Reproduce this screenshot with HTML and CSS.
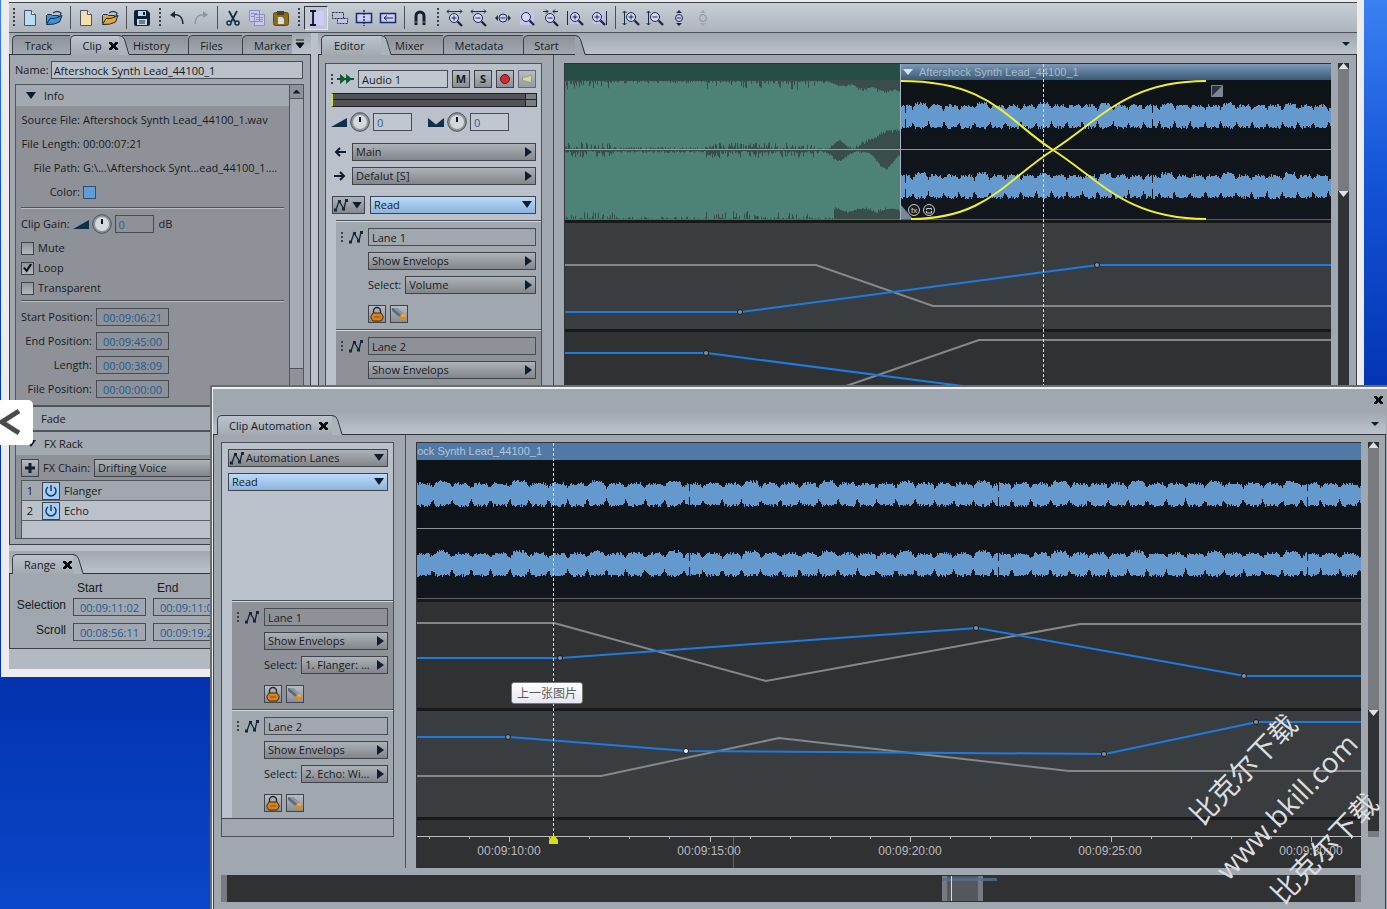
FILE: index.html
```
<!DOCTYPE html>
<html lang="en">
<head>
<meta charset="utf-8">
<title>Audio editor</title>
<link rel="stylesheet" href="styles.css">
</head>
<body>
<svg class="defs" width="0" height="0" aria-hidden="true">
  <defs>
    <symbol id="page" viewBox="0 0 18 18"><path d="M3.5 1.5h7l4 4v11h-11z" stroke="#4c5560"/><path d="M10.5 1.5v4h4" fill="#f4f8fb" stroke="#4c5560"/></symbol>
    <symbol id="folder" viewBox="0 0 18 18"><path d="M1.500 14.500V6.500l1-1h4l1 1h6v3" stroke="#16344f"/><path d="M8 4q4-3 8 0l-1 3" fill="none" stroke="#27435c" stroke-width="1.300"/><path d="M1.500 15.500 5 9.500q5 1 12-3L14.500 13q-5 3-13 2.500z" stroke="#10283c"/></symbol>
    <symbol id="mag" viewBox="0 0 18 18"><circle cx="8" cy="8" r="4.500" fill="#d6d6fa" stroke="#1b2a4a"/><path d="M11.500 11.500 16 16" stroke="#1b2a4a" stroke-width="2.400"/></symbol>
    <symbol id="env" viewBox="0 0 14 14"><path d="M2 12 5 3l5 8 2-9" fill="none" stroke="#13293a" stroke-width="1.300"/><path d="M0 10.500h3v3H0zM4 2h3v3H4zM8 9.500h3v3H8zM11 1h3v3h-3z" fill="#13293a"/></symbol>
    <symbol id="knob" viewBox="0 0 20 20"><circle cx="10" cy="10" r="9.300" fill="#8f949a" stroke="#4c5158"/><circle cx="10" cy="10" r="7" fill="#d3d8dd"/><path d="M10 5v5" stroke="#0c1118" stroke-width="2"/></symbol>
    <symbol id="wedge" viewBox="0 0 16 10"><path d="M0 10 16 1v9z" fill="#0f2f4c"/></symbol>
    <symbol id="pan" viewBox="0 0 16 10"><path d="M0 1 8 7.500 16 1v9H0z" fill="#0f2f4c"/></symbol>
    <symbol id="lock" viewBox="0 0 16 16"><path d="M4.500 8V5a3.500 3.500 0 0 1 7 0v3" fill="none" stroke="#25282c" stroke-width="1.400"/><path d="M4 7h8l2 3v2l-2 3H4l-2-3v-2z" fill="#d8821a" stroke="#3a2a12"/><path d="M5 11h6" stroke="#8d4e0a"/></symbol>
    <symbol id="eraser" viewBox="0 0 16 16"><path d="M1 2h5l6 5.500-3 4L1 5z" fill="#5f6a76"/><path d="M2 2h4l6 5.500-2 1.500z" fill="#8797a8"/><path d="m12 7.500 3 3V14h-5l-2-3.500z" fill="#dc8a22"/><path d="m12 7.500 3 3-4 .5-1-2z" fill="#f0aa4c"/></symbol>
    <symbol id="power" viewBox="0 0 16 16"><path d="M5 4a5 5 0 1 0 6 0" fill="none" stroke="#0f3f74" stroke-width="1.500"/><path d="M8 2v6" stroke="#0f3f74" stroke-width="1.500"/></symbol>
    <symbol id="slope" viewBox="0 0 14 20"><path class="slope-fill" d="M0 .5q4 0 5.500 4L10 16q1 3.500 4 3.500V20H0z"/><path d="M0 .5q4 0 5.500 4L10 19.500h4" fill="none" stroke="#2f343b"/></symbol>
    <linearGradient id="shade" x2="0" y2="1"><stop stop-color="#0e1318"/><stop offset="1" stop-color="#12171d"/></linearGradient>
  </defs>
</svg>

<main class="window main-window">
  <div class="client">
    <div class="toolbar" role="toolbar" aria-label="Main">
      <span class="grip first"></span>
      <button class="tool" aria-label="New session"><svg fill="#b9dcf3"><use href="#page"/></svg></button>
      <button class="tool" aria-label="Open session"><svg fill="#3f92dc"><use href="#folder"/></svg></button>
      <span class="sep"></span>
      <button class="tool" aria-label="New file"><svg fill="#f6dfae"><use href="#page"/></svg></button>
      <button class="tool" aria-label="Open file"><svg fill="#eca52c"><use href="#folder"/></svg></button>
      <span class="sep"></span>
      <button class="tool" aria-label="Save"><svg><path d="M1 3q0-2 2-2h11l3 3v11q0 2-2 2H3q-2 0-2-2z" fill="#0d2438"/><path d="M5 2h8v5H5zM4 10h10v6H4z" fill="#c9d6e0"/><path d="M10 3h2v3h-2z" fill="#0d2438"/><path d="M6 12h6M6 14h6" stroke="#0d2438"/></svg></button>
      <span class="grip"></span>
      <button class="tool" aria-label="Undo"><svg><path d="M5 6q9-2 10 9" fill="none" stroke="#1b2735" stroke-width="1.500"/><path d="m2 6 5-4v7z" fill="#1b2735"/></svg></button>
      <button class="tool" aria-label="Redo"><svg><path d="M13 6Q4 4 3 15" fill="none" stroke="#8d949c" stroke-width="1.500"/><path d="m16 6-5-4v7z" fill="#8d949c"/></svg></button>
      <span class="sep"></span>
      <button class="tool" aria-label="Cut"><svg><path d="m5 2 6 11M13 2 7 13" stroke="#12304a" stroke-width="1.800"/><circle cx="5" cy="14" r="2" fill="none" stroke="#12304a" stroke-width="1.500"/><circle cx="13" cy="14" r="2" fill="none" stroke="#12304a" stroke-width="1.500"/></svg></button>
      <button class="tool" aria-label="Copy"><svg fill="#c9c8ee" stroke="#8e8dbb"><path d="M1.500 1.500h10v11h-10zM6.500 5.500h10v11h-10z"/><path d="M3 4.500h6M8 8.500h7M8 10.500h7M8 12.500h7M3 7.500h3"/></svg></button>
      <button class="tool" aria-label="Paste"><svg><rect x="1.500" y="3.500" width="15" height="13" rx="2" fill="#8a6d1d" stroke="#5d4a14"/><path d="M5 2h7v4H5z" fill="#4b4226"/><path d="M6 8h4l2 2v5H6z" fill="#d5dbe6"/></svg></button>
      <span class="grip"></span>
      <button class="tool pressed" aria-label="Time selection"><svg><path d="M8 2h9v14H8z" fill="#cfcdf8"/><path d="M3 2h6M3 16h6M6 2v14" stroke="#101a30" stroke-width="1.800"/></svg></button>
      <button class="tool" aria-label="Range"><svg fill="none" stroke="#1b2a4a" stroke-dasharray="2 1"><path d="M1.500 3.500h11v6h-11z"/><path d="M6.500 9.500h10v5h-10z" fill="#c5c4ee"/></svg></button>
      <button class="tool" aria-label="Split"><svg fill="#cfcdf8" stroke="#1b2a6a"><path d="M1.500 4.500h15v9h-15z" stroke-width="1.500"/><path d="M9 1v16" stroke-dasharray="2 1" stroke-width="1.500"/></svg></button>
      <button class="tool" aria-label="Trim"><svg fill="#cfcdf8" stroke="#1b2a6a"><path d="M1.500 4.500h15v9h-15z" stroke-width="1.500"/><path d="M14 9H5m3-2.500L5 9l3 2.500" fill="none"/></svg></button>
      <span class="sep"></span>
      <button class="tool" aria-label="Snap"><svg><path d="M5 16V7a4 4 0 0 1 8 0v9" fill="none" stroke="#14202e" stroke-width="3"/><path d="M3 13h4M11 13h4" stroke="#7e8790"/></svg></button>
      <span class="grip"></span>
      <button class="tool" aria-label="Zoom in time"><svg><use href="#mag" y="1"/><path d="M5.500 9h5M8 6.500v5M1 2.500h15M3 .5l-2 2 2 2M14 .5l2 2-2 2" fill="none" stroke="#1b2a4a"/></svg></button>
      <button class="tool" aria-label="Zoom out time"><svg><use href="#mag" y="1"/><path d="M5.500 9h5M1 2.500h15M3 .5l-2 2 2 2M14 .5l2 2-2 2" fill="none" stroke="#1b2a4a"/></svg></button>
      <button class="tool" aria-label="Zoom full time"><svg><circle cx="9" cy="9" r="4" fill="#cfcdf8" stroke="#1b2a4a"/><path d="M6.500 9h5" stroke="#1b2a4a"/><path d="M4 6v6L1 9zM14 6v6l3-3z" fill="#1b2a4a"/></svg></button>
      <button class="tool" aria-label="Zoom selection"><svg><path d="M2 2h14v14H2z" fill="#c5c4f0"/><use href="#mag"/></svg></button>
      <button class="tool" aria-label="Zoom reset"><svg><use href="#mag" y="1"/><path d="M5.500 9h5M1 2.500h5M16 2.500h-5M4 .5l2 2-2 2M13 .5l-2 2 2 2" fill="none" stroke="#1b2a4a"/></svg></button>
      <button class="tool" aria-label="Zoom in point"><svg><path d="M4 2h10v13H4z" fill="#c5c4f0"/><use href="#mag" x="1"/><path d="M6.500 8h5M9 5.500v5M1.500 2v14" stroke="#1b2a4a"/></svg></button>
      <button class="tool" aria-label="Zoom out point"><svg><path d="M3 2h10v13H3z" fill="#c5c4f0"/><use href="#mag" x="-1"/><path d="M4.500 8h5M7 5.500v5M16.500 2v14" stroke="#1b2a4a"/></svg></button>
      <span class="sep"></span>
      <button class="tool" aria-label="Zoom in amplitude"><svg><use href="#mag" x="1"/><path d="M6.500 8h5M9 5.500v5M2.500 2v14M.5 4l2-2 2 2M.5 14l2 2 2-2" fill="none" stroke="#1b2a4a"/></svg></button>
      <button class="tool" aria-label="Zoom out amplitude"><svg><use href="#mag" x="1"/><path d="M6.500 8h5M2.500 2v14M.5 4l2-2 2 2M.5 14l2 2 2-2" fill="none" stroke="#1b2a4a"/></svg></button>
      <button class="tool" aria-label="Zoom full amplitude"><svg><circle cx="9" cy="9" r="3.500" fill="#cfcdf8" stroke="#1b2a4a"/><path d="M7 9h4" stroke="#1b2a4a"/><path d="M6 4h6L9 1zM6 14h6l-3 3z" fill="#1b2a4a"/></svg></button>
      <button class="tool" aria-label="Zoom reset amplitude"><svg><circle cx="9" cy="9" r="3.500" fill="#b9bec8" stroke="#8d939c"/><path d="M6 4h6L9 1zM6 14h6l-3 3z" fill="#a0a6af"/></svg></button>
    </div>

    <div class="workspace">
      <div class="side">
        <section class="pane clip-pane">
          <div class="tabs" role="tablist">
            <button class="tab w-track" role="tab">Track</button>
            <button class="tab active w-clip" role="tab">Clip <span class="x"></span></button>
            <svg class="slope on"><use href="#slope"/></svg>
            <button class="tab flat w-history" role="tab">History</button>
            <button class="tab w-files" role="tab">Files</button>
            <button class="tab w-marker" role="tab">Marker</button>
            <button class="more" aria-label="More tabs"><svg width="10" height="10"><path d="M1 1h8M1 4h8L5 9z" stroke="#0c0f13" fill="#0c0f13"/></svg></button>
          </div>
          <div class="pane-body clip-body">
            <div class="name-row"><label for="clip-name">Name:</label><input id="clip-name" class="field light" value="Aftershock Synth Lead_44100_1"></div>
            <div class="inspector">
              <div class="inspector-main">
                <h2 class="group-head first"><span class="tri down"></span>Info</h2>
                <dl class="facts">
                  <dt>Source File:</dt><dd>Aftershock Synth Lead_44100_1.wav</dd>
                  <dt>File Length:</dt><dd>00:00:07:21</dd>
                  <dt>File Path:</dt><dd>G:\...\Aftershock Synt...ead_44100_1....</dd>
                  <dt>Color:</dt><dd><button class="swatch" aria-label="Clip color"></button></dd>
                </dl>
                <hr class="rule">
                <div class="gain"><label for="gain">Clip Gain:</label><svg width="16" height="10"><use href="#wedge"/></svg><svg width="20" height="20"><use href="#knob"/></svg><input id="gain" class="field num" value="0"><span class="unit">dB</span></div>
                <label class="check"><input type="checkbox">Mute</label>
                <label class="check"><input type="checkbox" checked>Loop</label>
                <label class="check"><input type="checkbox">Transparent</label>
                <hr class="rule">
                <div class="times">
                  <label for="t1">Start Position:</label><input id="t1" class="field time" value="00:09:06:21">
                  <label for="t2">End Position:</label><input id="t2" class="field time" value="00:09:45:00">
                  <label for="t3">Length:</label><input id="t3" class="field time" value="00:00:38:09">
                  <label for="t4">File Position:</label><input id="t4" class="field time" value="00:00:00:00">
                </div>
                <h2 class="group-head lined"><span class="tri right"></span>Fade</h2>
                <h2 class="group-head lined"><span class="tri down"></span>FX Rack</h2>
                <div class="chain"><button class="mini" aria-label="Add effect"><svg width="12" height="12"><path d="M6 1v10M1 6h10" stroke="#0c2233" stroke-width="3"/></svg></button><label for="chain">FX Chain:</label><span class="drop grow"><select id="chain"><option>Drifting Voice</option></select></span></div>
                <ol class="fx">
                  <li><span class="num-cell">1</span><button class="mini blue" aria-label="Toggle Flanger"><svg width="16" height="16"><use href="#power"/></svg></button>Flanger</li>
                  <li><span class="num-cell">2</span><button class="mini blue" aria-label="Toggle Echo"><svg width="16" height="16"><use href="#power"/></svg></button>Echo</li>
                </ol>
              </div>
              <div class="vbar light-bar"><button aria-label="Scroll up"><span class="tri up small"></span></button><span class="thumb"></span></div>
            </div>
          </div>
        </section>
        <section class="pane range-pane">
          <div class="tabs" role="tablist">
            <button class="tab active w-range" role="tab">Range <span class="x"></span></button>
            <svg class="slope on"><use href="#slope"/></svg>
          </div>
          <div class="pane-body range-body">
            <span></span><span class="col">Start</span><span class="col">End</span>
            <span class="row-name">Selection</span><input aria-label="Selection start" class="field time" value="00:09:11:02"><input aria-label="Selection end" class="field time" value="00:09:11:02">
            <span class="row-name">Scroll</span><input aria-label="Scroll start" class="field time" value="00:08:56:11"><input aria-label="Scroll end" class="field time" value="00:09:19:23">
          </div>
        </section>
      </div>

      <section class="pane editor-pane">
        <div class="tabs" role="tablist">
          <button class="tab active w-editor" role="tab">Editor</button>
          <svg class="slope on"><use href="#slope"/></svg>
          <button class="tab flat w-mixer" role="tab">Mixer</button>
          <button class="tab w-meta" role="tab">Metadata</button>
          <button class="tab w-start" role="tab">Start</button>
          <svg class="slope"><use href="#slope"/></svg>
          <button class="caret" aria-label="Tab menu"><span class="tri down small"></span></button>
        </div>
        <div class="pane-body editor-body">
          <div class="track">
            <div class="row track-name"><span class="dots"></span><svg class="wave-icon" width="17" height="12"><path d="M0 6h17" stroke="#0f5a35" stroke-width="2"/><path d="M3 1l6 5-6 5zM9 1l6 5-6 5z" fill="#0f5a35"/></svg><input class="field grow light" aria-label="Track name" value="Audio 1"><button class="mini">M</button><button class="mini">S</button><button class="mini" aria-label="Record"><svg width="12" height="12"><circle cx="6" cy="6" r="4.500" fill="#d22a2e" stroke="#5d1518"/></svg></button><button class="mini faint" aria-label="Monitor"><svg width="12" height="12"><path d="M1.500 4h3l6-2v8l-6-2h-3z" fill="#dfe09a" stroke="#85886a"/></svg></button></div>
            <div class="meter"><span></span></div>
            <div class="row knobs"><svg width="16" height="10"><use href="#wedge"/></svg><svg width="20" height="20"><use href="#knob"/></svg><input class="field num light" aria-label="Volume" value="0"><svg class="pan" width="16" height="10"><use href="#pan"/></svg><svg width="20" height="20"><use href="#knob"/></svg><input class="field num light" aria-label="Pan" value="0"></div>
            <div class="row io"><svg width="14" height="12"><path d="M13 6H3m4-4L3 6l4 4" fill="none" stroke="#0c1f30" stroke-width="2"/></svg><span class="drop side-tri grow"><select aria-label="Output"><option>Main</option></select></span></div>
            <div class="row io"><svg width="14" height="12"><path d="M1 6h10M7 2l4 4-4 4" fill="none" stroke="#0c1f30" stroke-width="2"/></svg><span class="drop side-tri grow"><select aria-label="Input"><option>Defalut [S]</option></select></span></div>
            <div class="row auto"><button class="lanes-btn" aria-label="Lanes"><svg width="14" height="14"><use href="#env"/></svg><span class="tri down"></span></button><span class="drop read grow"><select aria-label="Automation mode"><option>Read</option></select></span></div>
            <div class="lane">
              <div class="row"><span class="lane-mark"><span class="dots"></span><svg width="14" height="14"><use href="#env"/></svg></span><input class="field grow" aria-label="Lane name" value="Lane 1"></div>
              <div class="row inset"><span class="drop side-tri grow"><select aria-label="Envelopes"><option>Show Envelops</option></select></span></div>
              <div class="row inset"><label for="s1">Select:</label><span class="drop side-tri grow"><select id="s1"><option>Volume</option></select></span></div>
              <div class="row inset tools"><button class="mini" aria-label="Lock"><svg width="16" height="16"><use href="#lock"/></svg></button><button class="mini" aria-label="Clear"><svg width="16" height="16"><use href="#eraser"/></svg></button></div>
            </div>
            <div class="lane dim">
              <div class="row"><span class="lane-mark"><span class="dots"></span><svg width="14" height="14"><use href="#env"/></svg></span><input class="field grow" aria-label="Lane name" value="Lane 2"></div>
              <div class="row inset"><span class="drop side-tri grow"><select aria-label="Envelopes"><option>Show Envelops</option></select></span></div>
            </div>
          </div>
          <div class="splitter"></div>
          <div class="canvas">
            <div class="clips">
              <div class="clip teal"><div class="clip-title"></div>
                <svg class="wave tall"><path fill="#4d8377" d="M0 0h3000v140H0z"/><path id="teal-shade" fill="#394d4a"/><path d="M0 69.500h3000" stroke="#97a5a1"/><path d="M0 139.500h3000" stroke="#5e6c6a"/></svg></div>
              <div class="clip blue"><div class="clip-title shaded"><span class="tri down pale"></span>Aftershock Synth Lead_44100_1</div>
                <svg class="wave tall"><path fill="url(#shade)" d="M0 0h3000v140H0z"/><path data-wave="36,15.400,251" fill="#6399cd"/><path data-wave="106,15.400,251" fill="#6399cd"/><path d="M0 69.500h3000" stroke="#8d9296"/><path d="M0 139.500h3000" stroke="#5b5f63"/><path d="M0 125v14h12z" fill="#788697"/><path d="M0 1C90 1 105 40 152 70S225 139 305 139M10 139C85 139 105 100 152 70S225 1 305 1" fill="none" stroke="#f0ef37" stroke-width="2"/><path d="M310.500 5.500h11v11h-11z" fill="#2b3440" stroke="#7e8791"/><path d="M321 6v11h-11z" fill="#7e8791"/><g fill="#1a1f25" stroke="#c6c9cc"><circle cx="13" cy="130" r="5.500"/><circle cx="28" cy="130" r="5.500"/><path d="M25.500 130v-1.500h5v1.500M30.500 131v2h-5v-2" fill="none"/></g><text x="10" y="133" class="fx-text">fx</text></svg></div>
            </div>
            <svg class="lane-plot lit"><path d="M0 42h251l117 41h3000" class="ghost"/><path d="M0 89h176L533 42h3000" class="curve"/><circle cx="175" cy="89" r="2.500"/><circle cx="532" cy="42" r="2.500"/></svg>
            <svg class="lane-plot"><path d="M206 80 414 8h3000" class="ghost"/><path d="M0 21h142L605 81" class="curve"/><circle cx="141" cy="21" r="2.500"/></svg>
            <div class="playhead in-editor"></div>
          </div>
          <div class="dark-bar editor-bar"><span class="tri up pale"></span><span class="track-fill"></span><span class="tri down pale"></span></div>
        </div>
      </section>
    </div>
    <div class="status"></div>
  </div>
</main>

<section class="window float-window">
  <div class="float-title"><button class="close" aria-label="Close"><span class="x"></span></button></div>
  <div class="tabs" role="tablist">
    <button class="tab active w-auto" role="tab">Clip Automation <span class="x"></span></button>
    <svg class="slope on"><use href="#slope"/></svg>
    <button class="caret" aria-label="Tab menu"><span class="tri down small"></span></button>
  </div>
  <div class="float-body">
    <div class="float-main">
      <div class="track float-track">
        <div class="row"><span class="drop grow with-icon"><svg width="14" height="14"><use href="#env"/></svg><select aria-label="Lanes"><option>Automation Lanes</option></select></span></div>
        <div class="row"><span class="drop read grow"><select aria-label="Automation mode"><option>Read</option></select></span></div>
        <div class="fill"></div>
        <div class="lane dim">
          <div class="row"><span class="lane-mark"><span class="dots"></span><svg width="14" height="14"><use href="#env"/></svg></span><input class="field grow" aria-label="Lane name" value="Lane 1"></div>
          <div class="row inset"><span class="drop side-tri grow"><select aria-label="Envelopes"><option>Show Envelops</option></select></span></div>
          <div class="row inset"><label for="s2">Select:</label><span class="drop side-tri grow"><select id="s2"><option>1. Flanger: ...</option></select></span></div>
          <div class="row inset tools"><button class="mini" aria-label="Lock"><svg width="16" height="16"><use href="#lock"/></svg></button><button class="mini" aria-label="Clear"><svg width="16" height="16"><use href="#eraser"/></svg></button></div>
        </div>
        <div class="lane">
          <div class="row"><span class="lane-mark"><span class="dots"></span><svg width="14" height="14"><use href="#env"/></svg></span><input class="field grow" aria-label="Lane name" value="Lane 2"></div>
          <div class="row inset"><span class="drop side-tri grow"><select aria-label="Envelopes"><option>Show Envelops</option></select></span></div>
          <div class="row inset"><label for="s3">Select:</label><span class="drop side-tri grow"><select id="s3"><option>2. Echo: Wi...</option></select></span></div>
          <div class="row inset tools"><button class="mini" aria-label="Lock"><svg width="16" height="16"><use href="#lock"/></svg></button><button class="mini" aria-label="Clear"><svg width="16" height="16"><use href="#eraser"/></svg></button></div>
        </div>
        <div class="track-foot"></div>
      </div>
      <div class="splitter"></div>
      <div class="canvas">
        <div class="clip"><div class="clip-title scrolled"><span>Aftershock Synth Lead_44100_1</span></div>
          <svg class="wave"><path fill="url(#shade)" d="M0 0h3000v139H0z"/><path data-wave="34,19.300,272" fill="#6399cd"/><path data-wave="104,19.300,272" fill="#6399cd"/><path d="M0 68.500h3000" stroke="#8d9296"/><path d="M0 138.500h3000" stroke="#5b5f63"/></svg></div>
        <svg class="lane-plot"><path d="M0 21h137l212 58 314-57h3000" class="ghost"/><path d="M0 56h144L560 26l268 48h3000" class="curve"/><circle cx="143" cy="56" r="2.500"/><circle cx="559" cy="26" r="2.500"/><circle cx="827" cy="74" r="2.500"/></svg>
        <svg class="lane-plot lit"><path d="M0 65h184l178-38 290 33h3000" class="ghost"/><path d="M0 26h92l178 14 418 3 152-32h3000" class="curve"/><circle cx="91" cy="26" r="2.500"/><circle cx="269" cy="40" r="2.500" class="hot"/><circle cx="687" cy="43" r="2.500"/><circle cx="839" cy="11" r="2.500"/></svg>
        <svg class="ruler"><path d="M0 16.500h3000" stroke="#b9bcbf"/><path id="ticks" stroke="#b9bcbf"/><path d="M316.500 17v31" stroke="#43698f"/><path d="M132 24v-4l3-4h3l3 4v4z" fill="#d6df10"/><g text-anchor="middle"><text x="92" y="35">00:09:10:00</text><text x="292" y="35">00:09:15:00</text><text x="493" y="35">00:09:20:00</text><text x="693" y="35">00:09:25:00</text><text x="894" y="35">00:09:30:00</text></g></svg>
        <div class="playhead in-float"></div>
      </div>
      <div class="dark-bar float-bar"><span class="tri up pale"></span><span class="track-fill"></span><span class="tri down pale"></span><span class="bar-end"></span></div>
    </div>
    <div class="overview"><svg><path d="M715 1h41v25h-41z" fill="#54575c"/><path d="M715 1h5v25h-5zM751 1h5v25h-5z" fill="#777a80"/><path d="M715 3h55v3h-55z" fill="#54708e" opacity=".8"/><path d="M724.500 1v25" stroke="#eef04a"/></svg></div>
  </div>
</section>

<button class="prev" aria-label="Previous"><svg width="34" height="46"><path d="M19 11 2 22l17 11" fill="none" stroke="#4b4b4b" stroke-width="5"/></svg></button>
<div class="tip" role="tooltip">上一张图片</div>
<div class="mark m1">比克尔下载</div>
<div class="mark m2">www.bkill.com</div>
<div class="mark m3">比克尔下载</div>
<script src="script.js"></script>
</body>
</html>
```
FILE: styles.css
```
* { box-sizing: border-box; }
body {
  margin: 0;
  min-height: 100vh;
  position: relative;
  overflow: hidden;
  font: 11px/14px "Open Sans", "Noto Sans", sans-serif;
  color: #171b21;
  background: linear-gradient(#3b80f2, #1353d6 20%, #0435b4 42%, #0333ae 75%, #0a47c9);
}
button, input, select { font: inherit; color: inherit; margin: 0; padding: 0; border: 0; background: none; border-radius: 0; }
svg { display: block; flex: none; overflow: hidden; }
.defs { position: absolute; }
h2, dl, dd, dt, ol { margin: 0; padding: 0; font-size: inherit; font-weight: normal; list-style: none; }
.grow { flex: 1; min-width: 0; }

.window { position: absolute; }
.main-window { left: 1px; right: 23px; top: 0; padding: 2px 7px 8px 8px; background: #ececee; }
.client { background: #bac1ca; }

.toolbar { display: flex; height: 31px; border-top: 1px solid #3e444c; border-bottom: 1px solid #4b5159; background: linear-gradient(#c9ced5, #adb4bc); }
.tool { width: 24px; height: 29px; display: grid; place-items: center; }
.tool svg { width: 18px; height: 18px; }
.tool.pressed { height: 24px; margin-top: 3px; border: 1px solid #30343b; border-right-color: #e2e4ee; border-bottom-color: #e2e4ee; background: #c3c5d8; }
.sep { width: 8px; display: grid; justify-content: center; }
.sep::before { content: ""; width: 1px; margin: 3px 0; background: #4b5159; }
.grip { width: 11px; display: grid; justify-content: center; }
.grip.first { width: 9px; }
.grip::before { content: ""; width: 2px; margin: 5px 0; background: repeating-linear-gradient(#3a4048 0 2px, transparent 2px 4px); }

.workspace { display: flex; gap: 7px; }
.side { width: 302px; display: flex; flex-direction: column; gap: 6px; }
.editor-pane { flex: 1; min-width: 0; display: flex; flex-direction: column; }
.tabs { height: 22px; display: flex; align-items: flex-end; padding-left: 3px; background: linear-gradient(#a1a7af, #bcc2cb); border-bottom: 1px solid #2f343b; }
.tab { height: 19px; padding-top: 1px; text-align: center; border: 1px solid #3b4047; border-bottom: 0; border-right: 0; border-radius: 5px 0 0 0; background: linear-gradient(#8d9299, #a2a8b0); white-space: nowrap; }
.tab.active { height: 20px; margin-bottom: -1px; background: linear-gradient(#bcc3cc, #a3a9b1); }
.tab.flat { border-left: 0; border-radius: 0; text-align: left; margin-left: -11px; padding-left: 11px; }
.slope { width: 14px; height: 20px; margin-bottom: -1px; position: relative; color: #9ea4ac; }
.slope-fill { fill: currentColor; }
.slope.on { color: #adb3bb; }
.w-track { width: 58px; padding-right: 6px; }
.w-clip { width: 49px; padding-left: 10px; }
.w-history { width: 66px; }
.w-files { width: 54px; padding-right: 8px; }
.w-marker { width: 50px; text-align: left; padding-left: 11px; }
.more { flex: 1; height: 20px; display: grid; align-items: center; padding-left: 3px; }
.w-editor { width: 60px; padding-left: 12px; text-align: left; }
.w-mixer { width: 59px; }
.w-meta { width: 80px; padding-right: 9px; }
.w-start { width: 52px; padding-right: 6px; }
.w-range { width: 61px; padding-left: 11px; text-align: left; }
.w-auto { width: 115px; padding-left: 11px; text-align: left; }
.caret { margin-left: auto; width: 22px; height: 20px; display: grid; place-items: center; }
.x { display: inline-block; width: 9px; height: 8px; margin-left: 4px; background: linear-gradient(45deg, transparent 38%, #090b0e 38% 62%, transparent 62%), linear-gradient(-45deg, transparent 38%, #090b0e 38% 62%, transparent 62%); }

.tri { display: inline-block; width: 10px; height: 7px; background: #0c1f30; clip-path: polygon(0 0, 100% 0, 50% 100%); flex: none; }
.tri.up { clip-path: polygon(0 100%, 100% 100%, 50% 0); }
.tri.right { width: 7px; height: 10px; clip-path: polygon(0 0, 100% 50%, 0 100%); }
.tri.small { width: 8px; height: 4px; }
.tri.pale { background: #dfe3e7; height: 6px; }

.pane-body { border: 1px solid #3b4047; border-top: 0; background: #a1a7af; }
.clip-body { padding: 6px 6px 5px 5px; height: 490px; display: flex; flex-direction: column; gap: 5px; }
.name-row { display: flex; align-items: center; gap: 2px; padding-right: 1px; }
.name-row .field { flex: 1; padding-left: 2px; }
.field { height: 18px; min-width: 0; padding: 0 3px; border: 1px solid #484d54; }
.field.light { background: #bac1c9; }
.track .field.light { background: #c1c7cf; }
.field.num { width: 39px; padding: 0 3px; color: #1d62a3; }
.field.time { width: 73px; padding: 0; text-align: center; color: #1b5b97; }

.inspector { flex: 1; display: flex; border: 1px solid #50555c; }
.inspector-main { flex: 1; min-width: 0; background: #8e9298; }
.group-head { height: 20px; display: flex; align-items: center; gap: 8px; padding: 0 10px; background: #a3a9b1; }
.group-head.first { height: 21px; }
.group-head.lined { height: 25px; border-top: 2px solid #50555c; }
.facts { display: grid; grid-template-columns: 59px 1fr; column-gap: 3px; grid-auto-rows: 24px; align-items: center; padding: 2px 0 3px 5px; white-space: nowrap; }
.facts dt, .times label { text-align: right; }
.swatch { display: block; width: 13px; height: 13px; background: #5f9cd8; border: 1px solid #31506e; }
.rule { height: 2px; margin: 0 5px; border: 0; border-top: 1px solid #4e5359; background: #b9bec4; }
.gain { height: 24px; margin: 3px 5px 2px; display: flex; align-items: center; gap: 3px; }
.unit { margin-left: 2px; }
.check { height: 20px; display: flex; align-items: center; gap: 4px; padding-left: 5px; }
.check input { appearance: none; width: 13px; height: 13px; border: 1px solid #3f444b; background: linear-gradient(#8f949b, #b2b8bf); display: grid; place-items: center; }
.check input:checked::after { content: ""; width: 9px; height: 9px; background: #0b0e12; clip-path: polygon(0 50%, 20% 38%, 38% 65%, 80% 0, 100% 12%, 42% 100%); }
.check + .rule { margin-top: 2px; }
.times { display: grid; grid-template-columns: 71px 73px; column-gap: 4px; grid-auto-rows: 24px; align-items: center; padding: 3px 5px 4px; white-space: nowrap; }
.chain { display: flex; align-items: center; gap: 4px; padding: 4px 0 3px 5px; }
.fx { margin-left: 5px; height: 58px; background: #bac1c9; border: 1px solid #50555c; border-bottom: 0; border-right: 0; }
.fx li { height: 20px; display: flex; align-items: center; gap: 4px; border-bottom: 1px solid #5b6067; }
.fx li:first-child { background: #a1a7af; }
.num-cell { width: 16px; text-align: center; }
.light-bar { width: 14px; border-left: 1px solid #50555c; background: #8e9298; display: flex; flex-direction: column; }
.light-bar button { height: 14px; display: grid; place-items: center; border-bottom: 1px solid #50555c; }
.light-bar .thumb { height: 270px; background: #a5abb3; border-bottom: 1px solid #50555c; }

.mini { width: 18px; height: 18px; display: grid; place-items: center; border: 1px solid #3f444b; background: linear-gradient(#b6bcc4, #898d93); font-weight: bold; flex: none; }
.mini.blue { background: #a9cdf0; }
.mini.faint { opacity: .7; }
.drop { height: 18px; position: relative; display: flex; align-items: center; border: 1px solid #3f444b; background: linear-gradient(#adb2b9, #82868b); }
.drop select { appearance: none; width: 100%; height: 16px; padding-left: 3px; outline: none; }
.drop::after { content: ""; position: absolute; right: 3px; top: 4px; width: 10px; height: 7px; background: #0c1f30; clip-path: polygon(0 0, 100% 0, 50% 100%); pointer-events: none; }
.drop.side-tri::after { width: 7px; height: 10px; top: 3px; clip-path: polygon(0 0, 100% 50%, 0 100%); }
.drop.read { background: linear-gradient(#b9dbfb, #8db4dc); }
.drop.with-icon { padding-left: 1px; }
.drop.with-icon select { padding-left: 2px; }

.range-pane .tabs { height: 23px; }
.range-body { height: 75px; padding: 7px 6px 0 5px; display: grid; grid-template-columns: 51px 73px 73px; column-gap: 7px; row-gap: 7px; grid-template-rows: 10px 18px 18px; align-items: start; font-family: "Liberation Sans", sans-serif; font-size: 12px; }
.range-body .time { font-family: "Open Sans", sans-serif; font-size: 11px; }
.col { padding-left: 4px; }
.row-name { text-align: right; }
.status { height: 20px; background: #b3b9c1; }

.editor-body { flex: 1; display: flex; padding: 8px 7px 0 6px; }
.track { width: 217px; flex: none; border: 1px solid #4b5058; background: #bac1ca; padding-top: 6px; }
.row { display: flex; align-items: center; gap: 5px; padding: 0 5px; }
.track-name { gap: 4px; }
.dots { width: 2px; height: 11px; background: repeating-linear-gradient(#3a4048 0 2px, transparent 2px 4px); }
.meter { height: 14px; margin: 5px 4px 0 5px; border: 1px solid #1d2024; background: linear-gradient(#515356 5px, #1d2024 5px 6px, #515356 6px); border-left: 2px solid #d3dc33; display: flex; justify-content: flex-end; }
.meter span { width: 11px; border-left: 1px solid #1d2024; background: linear-gradient(#7b7f84 5px, #1d2024 5px 6px, #7b7f84 6px); }
.knobs { margin-top: 5px; gap: 3px; padding-left: 5px; }
.knobs .pan { margin-left: 13px; }
.io { margin-top: 11px; padding-left: 7px; }
.io + .io { margin-top: 6px; }
.auto { margin-top: 11px; margin-bottom: 6px; padding-left: 6px; }
.lanes-btn { width: 33px; height: 18px; display: flex; align-items: center; gap: 4px; padding: 0 1px; border: 1px solid #3f444b; background: linear-gradient(#adb2b9, #85898e); }
.lane { margin-left: 10px; border-top: 1px solid #4b5058; box-shadow: inset 0 1px #d3d8de; background: #a1a7af; padding: 7px 0 6px; display: flex; flex-direction: column; gap: 6px; }
.lane.dim { background: #8e9298; }
.lane-mark { width: 27px; display: flex; align-items: center; gap: 6px; padding-left: 5px; }
.lane .row { padding-left: 0; gap: 5px; }
.lane .inset { padding-left: 32px; gap: 4px; }
.lane .tools { margin-top: 5px; }
.splitter { width: 1px; margin: -8px 10px 0 11px; background: #4b5058; }

.canvas { flex: 1; min-width: 0; position: relative; overflow: hidden; border-left: 1px solid #30353b; border-top: 1px solid #30353b; background: #17191b; align-self: flex-start; font-family: "Liberation Sans", sans-serif; }
.clips { display: flex; }
.clip { flex: 1; min-width: 0; }
.clip.teal { flex: none; width: 335px; }
.clip.teal .clip-title { background: #264e46; }
.clip.blue { border-left: 1px solid #a5b5c3; }
.clip-title { height: 16px; line-height: 16px; white-space: nowrap; overflow: hidden; background: #507aa5; color: #b4c6d6; }
.clip-title.shaded { display: flex; align-items: center; gap: 6px; padding-left: 2px; background: linear-gradient(#7c9ab8, #3a5976); color: #a9b8c5; }
.clip-title.scrolled { display: flex; justify-content: flex-end; height: 17px; padding-right: calc(100% - 125px); }
.clip-title.scrolled span { flex: none; }
.wave { width: 100%; height: 139px; }
.wave.tall { height: 140px; }
.fx-text { font-size: 8px; fill: #d5d8da; stroke: none; }
.lane-plot { width: 100%; height: 106px; margin-top: 3px; background: #303133; }
.lane-plot.lit { background: #3a3d40; }
.ghost { fill: none; stroke: #858789; stroke-width: 2; }
.curve { fill: none; stroke: #1c7be0; stroke-width: 2; }
.lane-plot circle { fill: #82919d; stroke: #15191d; }
.lane-plot .hot { fill: #fff; }
.ruler { width: 100%; height: 48px; margin-top: 3px; background: #303133; font-size: 12px; fill: #b9bcbf; }
.playhead { position: absolute; top: 0; width: 1px; background: repeating-linear-gradient(#f0f06a 0 3px, transparent 3px 5px); }
.in-editor { left: 478px; bottom: 0; }
.in-float { left: 136px; height: 394px; }
.dark-bar { width: 11px; margin-left: 7px; background: #303336; display: flex; flex-direction: column; align-items: center; }
.dark-bar .track-fill { width: 100%; background: #777a7f; }
.editor-bar .track-fill { height: 122px; }

.float-window { left: 210px; right: 0; top: 385px; bottom: 0; overflow: hidden; border-left: 2px solid #686d74; border-top: 2px solid #686d74; background: #a0a7af; box-shadow: inset 1px 2px #eef0f3; padding: 2px 1px 0 1px; }
.float-title { height: 22px; display: flex; justify-content: flex-end; align-items: center; }
.close { width: 20px; height: 20px; }
.float-window .tabs { height: 24px; padding-left: 4px; background: linear-gradient(#a0a7af, #bcc3cc); }
.float-body { border-left: 1px solid #3b4047; border-right: 1px solid #3b4047; padding: 7px 24px 60px 7px; }
.float-main { display: flex; margin-right: -18px; }
.float-track { width: 173px; align-self: flex-start; display: flex; flex-direction: column; gap: 0; }
.float-track > .row { margin-bottom: 6px; padding-left: 6px; }
.float-track .fill { height: 103px; }
.track-foot { height: 18px; border-top: 1px solid #3f444b; background: #a1a7af; }
.float-bar { height: 395px; }
.float-bar .track-fill { height: 262px; }
.float-bar .bar-end { width: 100%; height: 6px; margin-top: auto; background: #777a7f; }
.float-main .splitter { margin-top: -7px; }
.overview { height: 27px; margin-top: 7px; background: #303133; border-left: 6px solid #777a80; border-right: 6px solid #777a80; }
.overview svg { width: 100%; height: 27px; }

.prev { position: absolute; left: 0; top: 400px; width: 33px; height: 45px; background: #fff; border-radius: 0 5px 5px 0; overflow: hidden; }
.tip { position: absolute; left: 511px; top: 682px; padding: 2px 5px 3px; border: 1px solid #767676; border-radius: 3px; background: linear-gradient(#fff, #e6e7f0); color: #5a5a5a; font: 12px/15px "Noto Sans CJK SC", sans-serif; white-space: nowrap; }
.mark { position: absolute; font: 28px/36px "Open Sans", "Noto Sans CJK SC", sans-serif; color: #dcdddf; white-space: nowrap; transform: translate(-50%, -50%) rotate(-46deg); pointer-events: none; }
.m1 { left: calc(100% - 144px); top: 769px; }
.m2 { left: calc(100% - 101px); top: 806px; }
.m3 { left: calc(100% - 63px); top: 848px; }
```
FILE: script.js
```
let seed = 7;
const rnd = () => (seed = (seed * 16807) % 2147483647) / 2147483647;

// Lobed waveform: centre line, lobe period and x of the short gap.
document.querySelectorAll('[data-wave]').forEach(path => {
  const [cy, period, gap] = path.dataset.wave.split(',').map(Number);
  let d = '';
  for (let x = 0; x < 2600; x++) {
    const phase = (x + 4) / period;
    const edge = Math.abs(Math.sin(Math.PI * phase));
    const lobe = Math.min(1, edge * 1.6);
    const swell = Math.floor(phase) % 4 === 1 ? 2 : 0;
    let up = 5 + 4 * lobe + swell * lobe + rnd() * 3;
    let down = 4 + 6 * Math.min(1, edge * 2.2) + rnd() * 3;
    if (Math.abs((x - gap) % (period * 16)) < 1) { up = 3; down = 3; }
    d += `M${x} ${Math.round(cy - up)}h1V${Math.round(cy + down)}h-1z`;
  }
  path.setAttribute('d', d);
});

// Quiet areas of the teal clip: top edge, middle and bottom edge.
let shade = '';
for (let x = 0; x < 336; x++) {
  const late = Math.max(0, (x - 262) / 74);
  const busy = x < 50 || (x > 140 && x < 250) ? 1 : 0.3;
  const spike = Math.pow(rnd(), 4);
  const top = 1 + spike * 9 * busy + late * 9 + (late ? 3 * Math.abs(Math.sin(x / 7)) : 0);
  const up = 1 + Math.pow(rnd(), 2) * 7 * busy + (x > 265 ? 8 * Math.exp(-Math.pow((x - 274) / 7, 2)) : 0) + (x > 290 ? Math.min(16, (x - 290) / 2) + rnd() * 3 : 0);
  const down = 1 + Math.pow(rnd(), 2) * 7 * busy + (x > 260 ? 9 * Math.exp(-Math.pow((x - 274) / 9, 2)) : 0) + (x > 290 ? 17 * Math.exp(-Math.pow((x - 320) / 11, 2)) : 0);
  const low = 1 + Math.pow(rnd(), 4) * 8 * busy + (x > 268 ? 6 + 4 * Math.abs(Math.sin(x / 9)) : 0);
  shade += `M${x} 0h1V${top}h-1zM${x} ${70 - up}h1V${70 + down}h-1zM${x} ${140 - low}h1V140h-1z`;
}
document.getElementById('teal-shade').setAttribute('d', shade);

let ticks = '';
for (let i = -2; i < 60; i++) ticks += `M${Math.round(92 + i * 40.1) + 0.5} 17v${i % 5 === 0 ? 5 : 2}`;
document.getElementById('ticks').setAttribute('d', ticks);
```
